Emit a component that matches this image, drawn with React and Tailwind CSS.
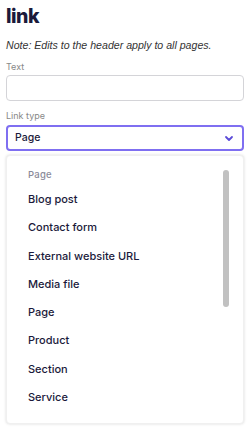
export default function App() {
  const options = ["Blog post", "Contact form", "External website URL", "Media file", "Page", "Product", "Section", "Service"];

  return (
    <div className="w-[250px] h-[431px] bg-white px-[6px] pt-[1px] font-['Inter',sans-serif] text-[#1b1a3b] overflow-hidden">
      <h1 className="text-[19.5px] font-extrabold leading-[30px] tracking-tight">link</h1>
      <p className="mt-[6px] text-[10.6px] italic text-[#333] leading-[16px] whitespace-nowrap font-['Liberation_Sans',sans-serif]">Note: Edits to the header apply to all pages.</p>

      <label className="block mt-[8px] text-[9px] text-[#888] leading-[12px]">Text</label>
      <div className="mt-[2px] h-[26px] rounded-[4px] border border-[#d4d4d8]"></div>

      <label className="block mt-[9px] text-[9px] text-[#888] leading-[12px]">Link type</label>
      <div className="mt-[3px] h-[26px] rounded-[4px] border-2 border-[#7f6ff1] flex items-center justify-between px-[7px]">
        <span className="text-[10.5px] font-medium">Page</span>
        <svg width="10" height="7" viewBox="0 0 10 7" className="mr-[1px]">
          <path d="M2 2l3 3 3-3" fill="none" stroke="#5b4bd8" strokeWidth="1.8" strokeLinecap="round" strokeLinejoin="round" />
        </svg>
      </div>

      <div className="mt-[4px] h-[269px] rounded-[4px] bg-white shadow-[0_0_3px_rgba(0,0,0,0.15)] border border-[#f0f0f0] flex">
        <div className="flex-1 pl-[21px] pt-[11px]">
          <div className="text-[9.5px] font-medium tracking-wide text-[#8a8a99] leading-[16px]">Page</div>
          {options.map((o, i) => (
            <div key={o} className={`${i === 0 ? "mt-[8px]" : "mt-[12.3px]"} text-[11px] font-medium leading-[16px]`}>{o}</div>
          ))}
        </div>
        <div className="w-[6px] mr-[14px] mt-[14px] h-[137px] rounded-full bg-[#c1c1c1]"></div>
      </div>
    </div>
  );
}
